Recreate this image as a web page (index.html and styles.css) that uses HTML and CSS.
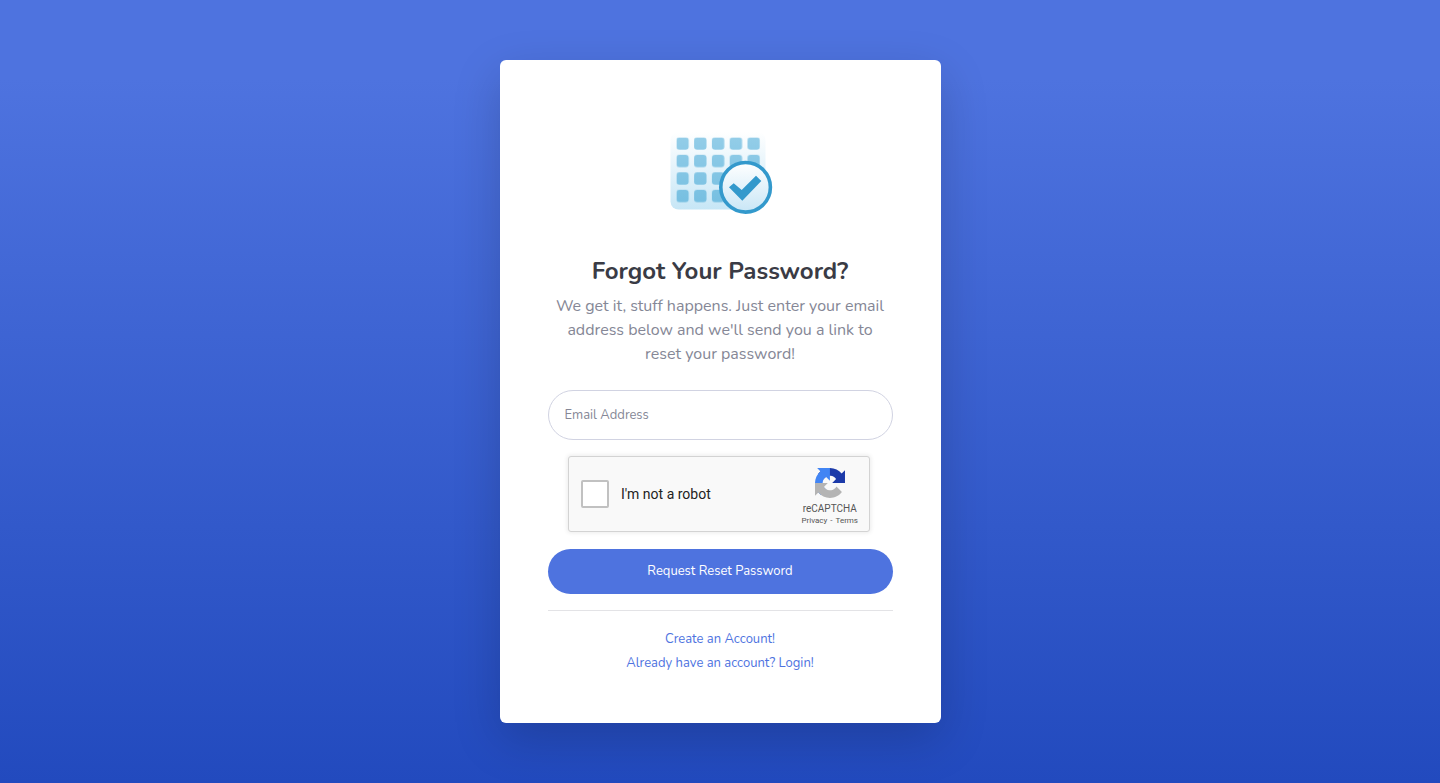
FILE: index.html
```
<!DOCTYPE html>
<html lang="en">
<head>
    <meta charset="UTF-8">
    <meta name="viewport" content="width=device-width, initial-scale=1.0">
    <title>Forgot Password</title>
    <link rel="stylesheet" href="styles.css">
</head>
<body>
    <main class="card">
        <svg class="logo" viewBox="0 0 130 132" aria-hidden="true">
            <defs>
                <linearGradient id="panel" x1="0" y1="0" x2="0" y2="1">
                    <stop offset="0" stop-color="#ffffff"/>
                    <stop offset="1" stop-color="#c6e6f6"/>
                </linearGradient>
                <linearGradient id="tile" gradientUnits="userSpaceOnUse" x1="0" y1="29" x2="0" y2="95">
                    <stop offset="0" stop-color="#93cde8"/>
                    <stop offset="1" stop-color="#76bfe1"/>
                </linearGradient>
                <linearGradient id="face" x1="0" y1="0" x2="0" y2="1">
                    <stop offset="0" stop-color="#ffffff"/>
                    <stop offset="1" stop-color="#c8e6f6"/>
                </linearGradient>
                <pattern id="tiles" patternUnits="userSpaceOnUse" x="21.3" y="29.3" width="17.8" height="17.5">
                    <rect width="12.4" height="12.4" rx="3.2" fill="#fff"/>
                </pattern>
                <mask id="grid">
                    <rect x="21.3" y="29.3" width="84" height="66" fill="url(#tiles)"/>
                </mask>
            </defs>
            <rect x="15.5" y="24" width="95" height="77.5" rx="8" fill="url(#panel)"/>
            <rect x="21.3" y="29.3" width="84" height="66" fill="url(#tile)" mask="url(#grid)"/>
            <circle cx="90.6" cy="79.3" r="24.8" fill="url(#face)" stroke="#3399cc" stroke-width="3.6"/>
            <path d="M74 79.3l4.7-4 8 6.7L101 67.7l5.3 5.3-19 19.7z" fill="#3399cc"/>
        </svg>

        <h1 class="title">Forgot Your Password?</h1>
        <p class="intro">We get it, stuff happens. Just enter your email address below and we'll send you a link to reset your password!</p>

        <form class="reset-form" method="POST" action="/forgot-password">
            <input type="email" class="email" name="email" aria-label="Email Address" placeholder="Email Address">

            <div class="captcha">
                <input type="checkbox" class="captcha-check" id="robot" name="robot">
                <label class="captcha-label" for="robot">I'm not a robot</label>
                <div class="captcha-brand">
                    <svg class="captcha-logo" viewBox="0 0 64 64" aria-hidden="true">
                        <path fill="#1c3aa9" d="M64 31.955l-.033-1.37V4.687l-7.16 7.16C50.948 4.674 42.033.093 32.05.093c-10.4 0-19.622 4.96-25.458 12.64l11.736 11.86a15.55 15.55 0 0 1 4.754-5.334c2.05-1.6 4.952-2.906 8.968-2.906.485 0 .86.057 1.135.163 4.976.393 9.288 3.14 11.828 7.124l-8.307 8.307L64 31.953"/>
                        <path fill="#4285f4" d="M31.862.094l-1.37.033H4.594l7.16 7.16C4.58 13.147 0 22.06 0 32.046c0 10.4 4.96 19.622 12.64 25.458L24.5 45.768a15.55 15.55 0 0 1-5.334-4.754c-1.6-2.05-2.906-4.952-2.906-8.968 0-.485.057-.86.163-1.135.393-4.976 3.14-9.288 7.124-11.828l8.307 8.307L31.86.095"/>
                        <path fill="#b4b4b4" d="M.001 32.045l.033 1.37v25.898l7.16-7.16c5.86 7.173 14.774 11.754 24.76 11.754 10.4 0 19.622-4.96 25.458-12.64l-11.736-11.86a15.55 15.55 0 0 1-4.754 5.334c-2.05 1.6-4.952 2.906-8.968 2.906-.485 0-.86-.057-1.135-.163-4.976-.393-9.288-3.14-11.828-7.124l8.307-8.307c-10.522.04-22.4.066-27.295-.005"/>
                    </svg>
                    <span class="captcha-name">reCAPTCHA</span>
                    <div class="captcha-terms"><a href="#">Privacy</a><span>-</span><a href="#">Terms</a></div>
                </div>
            </div>

            <button type="submit" class="submit">Request Reset Password</button>
        </form>

        <hr class="divider">

        <nav class="links">
            <a href="#">Create an Account!</a>
            <a href="#">Already have an account? Login!</a>
        </nav>
    </main>
</body>
</html>
```
FILE: styles.css
```
* {
    box-sizing: border-box;
}

body {
    margin: 0;
    min-height: 100vh;
    padding: 60px 12px;
    display: flex;
    justify-content: center;
    align-items: flex-start;
    font-family: Nunito, Lato, sans-serif;
    font-size: 16px;
    line-height: 24px;
    color: #858796;
    background: linear-gradient(180deg, #4e73df 10%, #224abe 100%);
}

.card {
    width: 100%;
    max-width: 441px;
    padding: 48px;
    background-color: #fff;
    border-radius: 6px;
    box-shadow: 0 16px 48px rgba(0, 0, 0, 0.175);
    text-align: center;
}

.logo {
    display: block;
    width: 130px;
    margin: 0 auto 16px;
}

.title {
    margin: 0 0 8px;
    font-size: 24px;
    font-weight: 700;
    line-height: 30px;
    color: #3a3b45;
}

.intro {
    margin: 0 0 24px;
}

.reset-form {
    display: flex;
    flex-direction: column;
    gap: 16px;
}

.email {
    width: 100%;
    height: 50px;
    padding: 0 16px;
    border: 1px solid #d1d3e2;
    border-radius: 25px;
    font-family: inherit;
    font-size: 13px;
    color: #6e707e;
}

.email::placeholder {
    color: #858796;
}

.captcha {
    display: flex;
    align-items: center;
    align-self: center;
    width: 100%;
    max-width: 302px;
    height: 76px;
    margin: 0 2px 1px 0;
    padding: 0 11px 0 12px;
    border: 1px solid #d3d3d3;
    border-radius: 3px;
    background-color: #f9f9f9;
    box-shadow: 0 0 4px 1px rgba(0, 0, 0, 0.08);
    font-family: Roboto, sans-serif;
    color: #555;
}

.captcha-check {
    appearance: none;
    width: 28px;
    height: 28px;
    margin: 0 12px 0 0;
    border: 2px solid #c1c1c1;
    border-radius: 2px;
    background-color: #fff;
}

.captcha-label {
    flex: 1;
    text-align: left;
    font-size: 14px;
    color: #222;
}

.captcha-brand {
    display: flex;
    flex-direction: column;
    align-items: center;
    padding-top: 6px;
}

.captcha-logo {
    width: 30px;
    height: 30px;
    margin-bottom: 4px;
}

.captcha-name {
    font-size: 10px;
    line-height: 14px;
}

.captcha-terms {
    display: flex;
    gap: 3px;
    font-size: 8px;
    line-height: 10px;
}

.captcha-terms a {
    color: inherit;
    text-decoration: none;
}

.submit {
    height: 45px;
    padding: 0 12px 1px;
    border: none;
    border-radius: 25px;
    background-color: #4e73df;
    font-family: inherit;
    font-size: 13px;
    color: #fff;
    cursor: pointer;
}

.submit:hover {
    background-color: #2e59d9;
}

.divider {
    margin: 16px 0;
    border: 0;
    border-top: 1px solid #e3e3e6;
}

.links {
    display: flex;
    flex-direction: column;
    align-items: center;
    font-size: 13px;
}

.links a {
    color: #4e73df;
    text-decoration: none;
}

.links a:hover {
    text-decoration: underline;
}
```
